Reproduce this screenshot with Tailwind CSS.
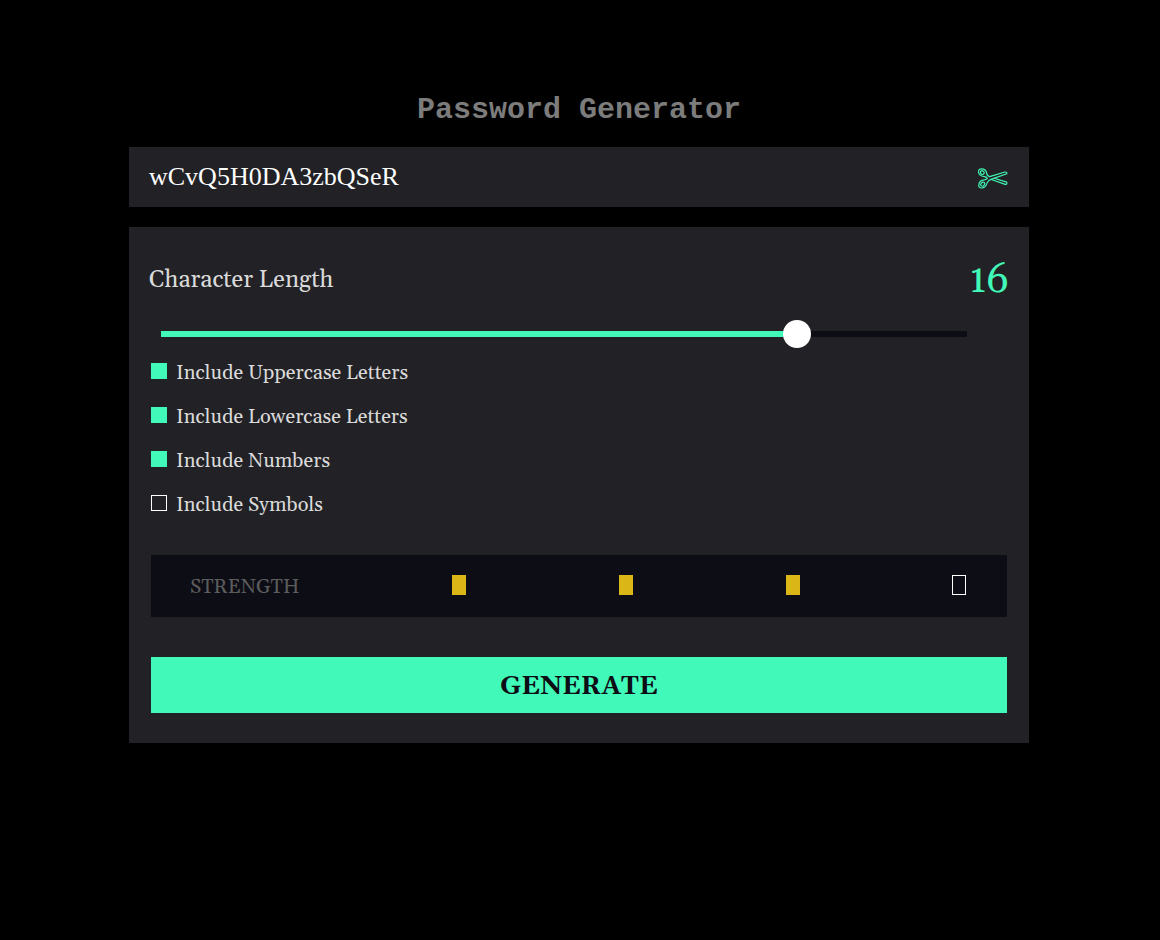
<!DOCTYPE html>
<html lang="en">
<head>
<meta charset="utf-8">
<title>Password Generator</title>
<script src="https://cdn.jsdelivr.net/npm/@tailwindcss/browser@4"></script>
</head>
<body class="min-h-screen bg-black font-[Georgia,Gelasio,'DejaVu_Serif_Condensed','Liberation_Serif',serif]">
<main class="ml-[129px] flex w-[900px] flex-col pt-[89px]">
  <h1 class="h-[58px] text-center font-['Courier_New','Liberation_Mono',monospace] text-[30px] leading-[42px] font-bold text-[#7c7c7c]">Password Generator</h1>
  <section class="flex h-[60px] items-center justify-between bg-[#222226] pr-5 pl-5">
    <span class="font-['Liberation_Serif',serif] text-[26px] leading-[60px] text-white">wCvQ5H0DA3zbQSeR</span>
    <button aria-label="Copy" class="mt-1">
      <svg class="-ml-px block" width="32" height="24" viewBox="0 0 32 24" fill="none" stroke="#41f4b4" stroke-width="1.2" stroke-linejoin="round">
        <path d="M12.7 9.6 28 5Q30.2 4.8 29.8 6.8L14 12.4Q11.7 13.2 10.2 15.7C9.3 19.2 7.2 21 4.6 21 2.5 21 1.6 19.6 1.8 18 2.1 14.9 4.3 13 7.4 12.8 9.3 12.6 10 12 10.4 11.3 9.8 10.4 9.1 9.9 7.3 9.7 4.2 9.3 1.8 7.6 1.5 5 1.3 3 2.5 1.9 4.5 1.9 7.2 1.9 9.3 3.8 9.7 6.4 10 8.3 11 9.3 12.7 9.6Z"/>
        <path d="M14.3 12.5 28.2 17.4Q30.4 17.4 29.7 15.1L17.2 11.2"/>
        <ellipse cx="5.3" cy="5.6" rx="2" ry="1.7" transform="rotate(35 5.3 5.6)"/>
        <ellipse cx="5.7" cy="17.2" rx="2.2" ry="1.7" transform="rotate(-50 5.7 17.2)"/>
      </svg>
    </button>
  </section>
  <section class="mt-5 flex h-[516px] flex-col bg-[#222226] px-5 pt-7 text-[#dadada]">
    <div class="flex h-12 items-center justify-between">
      <span class="pt-0.5 text-[24px]">Character Length</span>
      <span class="pt-1 text-[40px] leading-[48px] text-[#41f9b8]">16</span>
    </div>
    <div class="relative mt-7 ml-3 h-1.5 w-[806px] bg-[#0d0d15]">
      <div class="h-full w-[636px] bg-[#41f9b8]"></div>
      <div class="absolute -top-[11px] left-[622px] size-7 rounded-full bg-white"></div>
    </div>
    <ul class="mt-3 ml-0.5 text-[20px] leading-[44px]">
      <li class="flex h-11 items-center gap-[9px]"><span class="size-4 bg-[#41f9b8]"></span><span class="mt-1">Include Uppercase Letters</span></li>
      <li class="flex h-11 items-center gap-[9px]"><span class="size-4 bg-[#41f9b8]"></span><span class="mt-1">Include Lowercase Letters</span></li>
      <li class="flex h-11 items-center gap-[9px]"><span class="size-4 bg-[#41f9b8]"></span><span class="mt-1">Include Numbers</span></li>
      <li class="flex h-11 items-center gap-[9px]"><span class="size-4 border border-white"></span><span class="mt-1">Include Symbols</span></li>
    </ul>
    <div class="mx-0.5 mt-[30px] flex h-[62px] items-center bg-[#0d0d15] pr-[41px] pl-[39px]">
      <span class="w-[262px] pt-0.5 text-[20px] text-[#5c5c5c]">STRENGTH</span>
      <div class="flex flex-1 gap-[153px] pb-0.5">
        <span class="h-5 w-3.5 bg-[#dab617]"></span>
        <span class="h-5 w-3.5 bg-[#dab617]"></span>
        <span class="h-5 w-3.5 bg-[#dab617]"></span>
        <span class="-ml-px h-5 w-3.5 border border-white"></span>
      </div>
    </div>
    <button class="mx-0.5 mt-10 h-14 bg-[#41f9b8] pt-0.5 text-[26px] font-bold text-[#0d0d15]">GENERATE</button>
  </section>
</main>
</body>
</html>
